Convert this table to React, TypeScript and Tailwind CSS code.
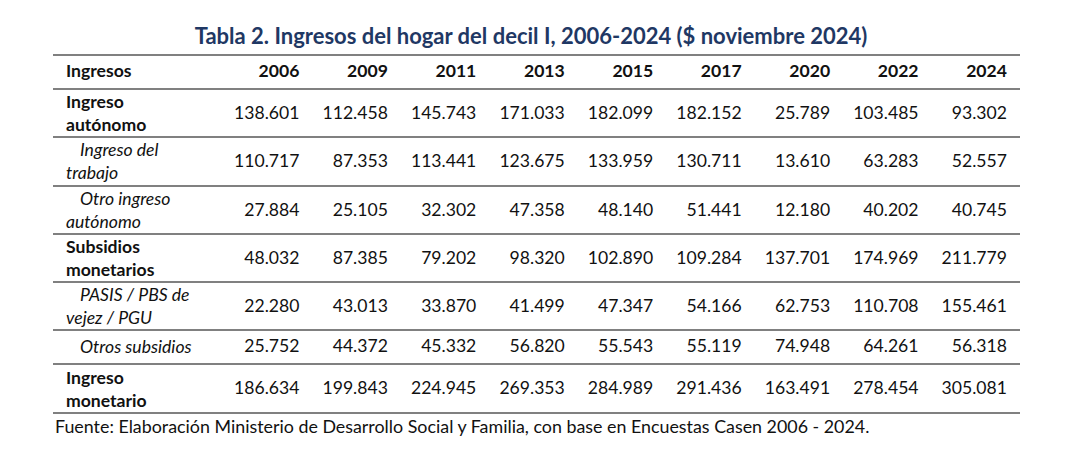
import React from 'react';

// ── Data ───────────────────────────────────────────────────────────────────────
const years = ['2006', '2009', '2011', '2013', '2015', '2017', '2020', '2022', '2024'];

type Row = {
  lines: string[];
  kind: 'bold' | 'italic';
  values: string[];
};

const rows: Row[] = [
  {
    lines: ['Ingreso', 'autónomo'],
    kind: 'bold',
    values: ['138.601', '112.458', '145.743', '171.033', '182.099', '182.152', '25.789', '103.485', '93.302'],
  },
  {
    lines: ['Ingreso del', 'trabajo'],
    kind: 'italic',
    values: ['110.717', '87.353', '113.441', '123.675', '133.959', '130.711', '13.610', '63.283', '52.557'],
  },
  {
    lines: ['Otro ingreso', 'autónomo'],
    kind: 'italic',
    values: ['27.884', '25.105', '32.302', '47.358', '48.140', '51.441', '12.180', '40.202', '40.745'],
  },
  {
    lines: ['Subsidios', 'monetarios'],
    kind: 'bold',
    values: ['48.032', '87.385', '79.202', '98.320', '102.890', '109.284', '137.701', '174.969', '211.779'],
  },
  {
    lines: ['PASIS / PBS de', 'vejez / PGU'],
    kind: 'italic',
    values: ['22.280', '43.013', '33.870', '41.499', '47.347', '54.166', '62.753', '110.708', '155.461'],
  },
  {
    lines: ['Otros subsidios'],
    kind: 'italic',
    values: ['25.752', '44.372', '45.332', '56.820', '55.543', '55.119', '74.948', '64.261', '56.318'],
  },
  {
    lines: ['Ingreso', 'monetario'],
    kind: 'bold',
    values: ['186.634', '199.843', '224.945', '269.353', '284.989', '291.436', '163.491', '278.454', '305.081'],
  },
];

const grid = 'grid grid-cols-[171px_repeat(9,minmax(0,1fr))] items-center border-b-2 border-[#808080]';

// ── Table ──────────────────────────────────────────────────────────────────────
export default function App() {
  return (
    <div className="min-h-[451px] w-[1080px] bg-white font-['Lato','Liberation_Sans',sans-serif] text-[17.6px] text-[#111]">
      <div className="ml-[53px] w-[967px] pt-[22px]">
        {/* Title */}
        <h1 className="mb-[4px] pr-[11px] text-center text-[22px] font-bold leading-[28px] text-[#1f3864]">
          Tabla 2. Ingresos del hogar del decil I, 2006-2024 ($ noviembre 2024)
        </h1>

        <div className="border-t-2 border-[#808080]">
          {/* Header */}
          <div className={`${grid} h-[34px] pb-[2px] font-bold`}>
            <div className="pl-[13px]">Ingresos</div>
            {years.map((y) => (
              <div key={y} className="pr-[13px] text-right">
                {y}
              </div>
            ))}
          </div>

          {/* Body */}
          {rows.map((row) => (
            <div key={row.lines.join(' ')} className={`${grid} ${row.lines.length > 1 ? 'h-[48.3px]' : 'h-[34px] pb-[2px]'}`}>
              <div
                className={`pl-[13px] leading-[23px] ${
                  row.kind === 'bold' ? 'font-bold' : 'italic'
                }`}
              >
                {row.lines.map((l, i) => (
                  <div key={l} className={row.kind === 'italic' && i === 0 ? 'pl-[14px]' : ''}>
                    {l}
                  </div>
                ))}
              </div>
              {row.values.map((v, i) => (
                <div key={i} className="pr-[13px] text-right">
                  {v}
                </div>
              ))}
            </div>
          ))}
        </div>

        {/* Source */}
        <p className="pl-[2px] text-[17.85px] leading-[25px]">
          Fuente: Elaboración Ministerio de Desarrollo Social y Familia, con base en Encuestas Casen 2006 - 2024.
        </p>
      </div>
    </div>
  );
}
